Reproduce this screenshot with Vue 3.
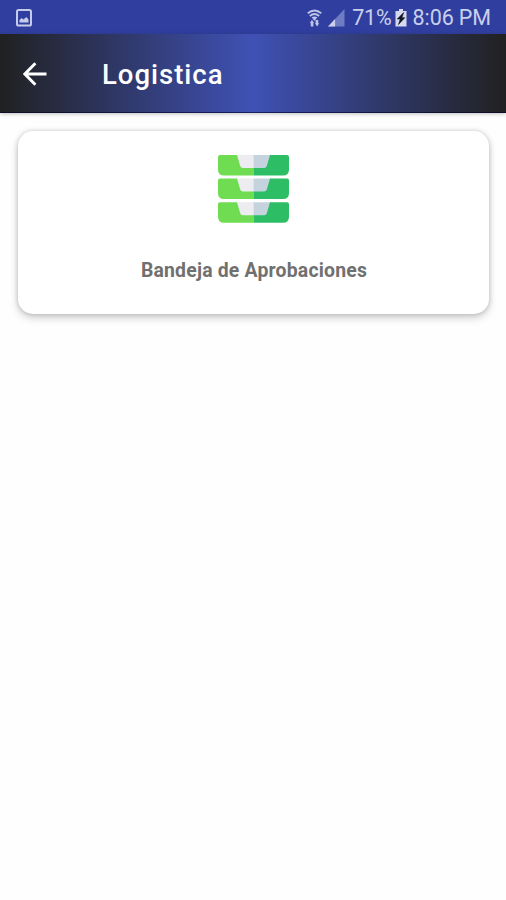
<template>
  <div class="screen">
    <div class="status-bar">
      <svg class="picture-icon" width="16" height="18" viewBox="0 0 16 18">
        <rect x="1" y="1" width="14" height="15.500" rx="1.600" fill="none" stroke="#c5cbea" stroke-width="2" />
        <path d="M3.500 13.500V11l2.300-2 1.700 1.400L10.300 8l2.200 2.500v3z" fill="#c5cbea" />
      </svg>

      <div class="status-info">
        <svg class="wifi-icon" width="15" height="18" viewBox="0 0 16 18" preserveAspectRatio="none">
          <g fill="none" stroke="#bdc4e8" stroke-width="1.900">
            <path d="M.8 4.300Q8-1.500 15.200 4.300" />
            <path d="M3 7Q8 3 13 7" />
          </g>
          <path d="M5 8.300Q8 6.500 11 8.300L8 12z" fill="#bdc4e8" />
          <path d="M3 14 5.300 10.800l2.200 3.200H6.800v3.500H4V14zM8.500 14.300h.7V11H12v3.300h1l-2.200 3.200z" fill="#bdc4e8" />
        </svg>
        <svg class="signal-icon" width="17" height="18" viewBox="0 0 18 18" preserveAspectRatio="none">
          <path d="M17.500 0v17.500H0z" fill="#6f7cc4" />
          <path d="M7.500 10v7.500H0z" fill="#c9cfec" />
        </svg>
        <span class="percent">{{ battery }}%</span>
        <svg class="battery-icon" width="12" height="18" viewBox="0 0 12 18">
          <path d="M4 0h4v2h3.500v15.500H.5V2H4z" fill="#d5d9ee" />
          <path d="M8.700 3.500 2.300 10h3L3.500 15.500 9.800 8.700H6.900z" fill="#111522" stroke="#111522" stroke-width=".6" />
        </svg>
        <span class="clock">{{ time }}</span>
      </div>
    </div>

    <header class="toolbar">
      <button class="back" aria-label="Volver">
        <svg width="24" height="24" viewBox="0 0 24 24">
          <path d="M12.400 1.300 1.900 12l10.500 10.700M2.200 12H23.500" fill="none" stroke="#fff" stroke-width="2.900" />
        </svg>
      </button>
      <h1 class="title">{{ title }}</h1>
    </header>

    <main class="content">
      <div v-for="item in items" :key="item.id" class="card">
        <svg class="tray-icon" width="71" height="68" viewBox="0 0 71 68">
          <g v-for="y in [0, 23.600, 47.200]" :key="y" :transform="`translate(0 ${y})`">
            <path d="M18 0h17.500v14H24q-2 0-2.500-2z" fill="#ececf1" />
            <path d="M35.500 0H53l-3.500 12q-.5 2-2.500 2H35.500z" fill="#c5d3df" />
            <path d="M2 0h17l3.200 11q.6 2 2.600 2h10.700v7.500H6q-6 0-6-6V2q0-2 2-2z" fill="#6fdc52" />
            <path d="M69 0H52l-3.200 11q-.6 2-2.600 2H35.500v7.500H65q6 0 6-6V2q0-2-2-2z" fill="#2dbd64" />
          </g>
        </svg>
        <p class="card-label">{{ item.label }}</p>
      </div>
    </main>
  </div>
</template>

<script setup>
import { ref } from 'vue'

const title = ref('Logistica')
const battery = ref(71)
const time = ref('8:06 PM')

const items = ref([
  { id: 1, label: 'Bandeja de Aprobaciones' },
])
</script>

<style>
body {
  background: #fefefe;
}
</style>

<style scoped>
.screen {
  min-height: 900px;
  background: #fefefe;
  font-family: Roboto, "Liberation Sans", sans-serif;
}

/* Status bar */
.status-bar {
  display: flex;
  align-items: center;
  justify-content: space-between;
  height: 34px;
  padding: 2px 15px 0 16px;
  box-sizing: border-box;
  background: #303f9f;
  color: #c9cfec;
  font-size: 21.5px;
  line-height: 32px;
}
.status-info { display: flex; align-items: center; white-space: nowrap; }
.status-info svg { display: block; }
.wifi-icon { margin-right: 6px; }
.signal-icon { margin-right: 7px; }
.percent { margin-right: 3px; letter-spacing: -0.2px; }
.battery-icon { margin-right: 6px; }
.clock { letter-spacing: -0.1px; }

/* Toolbar */
.toolbar {
  display: flex;
  align-items: center;
  height: 79px;
  padding: 2px 0 0 23px;
  box-sizing: border-box;
  background: linear-gradient(to right, #212121, #3f51b5 50%, #212121);
  border-bottom: 1px solid rgba(0, 0, 40, 0.6);
  box-shadow: 0 1px 4px rgba(0, 0, 0, 0.25);
}
.back { display: flex; padding: 0; border: none; background: transparent; cursor: pointer; }
.title { margin: 2px 0 0 55px; color: #fff; font-size: 27.5px; font-weight: 500; letter-spacing: 1px; line-height: 32px; }

/* Cards */
.content { padding: 18px 17px 0 18px; }
.card {
  display: flex;
  flex-direction: column;
  align-items: center;
  height: 183px;
  padding-top: 24px;
  box-sizing: border-box;
  background: #fff;
  border-radius: 15px;
  box-shadow: 0 0 5px rgba(0, 0, 0, 0.18), 0 4px 9px rgba(0, 0, 0, 0.18);
}
.tray-icon { display: block; }
.card-label { margin: 36px 0 0; padding-left: 1px; color: #707070; font-size: 19.4px; font-weight: 700; letter-spacing: 0.2px; line-height: 24px; }
</style>
